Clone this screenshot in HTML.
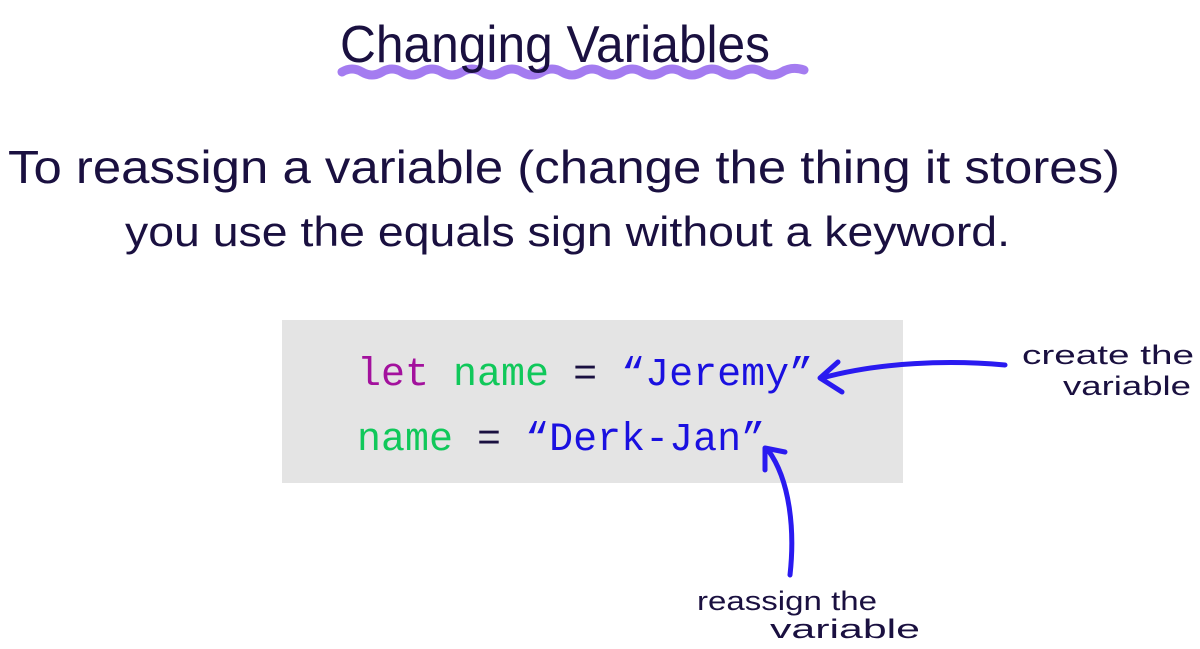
<!DOCTYPE html>
<html><head><meta charset="utf-8"><style>
html,body{margin:0;padding:0;background:#fff;width:1200px;height:649px;overflow:hidden}
</style></head><body>
<svg width="1200" height="649" viewBox="0 0 1200 649" xmlns="http://www.w3.org/2000/svg">
<path d="M342 72 q10 -6 20 0 t20 0 t20 0 t20 0 t20 0 t20 0 t20 0 t20 0 t20 0 t20 0 t20 0 t20 0 t20 0 t20 0 t20 0 t20 0 t20 0 t20 0 t20 0 t20 0 t20 0 t20 0 t22 -2" fill="none" stroke="#a47cf0" stroke-width="9" stroke-linecap="round"/>
<g font-family="Liberation Sans, sans-serif" fill="#1a1040">
<text x="340" y="62" font-size="52" textLength="430" lengthAdjust="spacingAndGlyphs">Changing Variables</text>
<text x="8" y="183" font-size="46" textLength="1112" lengthAdjust="spacingAndGlyphs">To reassign a variable (change the thing it stores)</text>
<text x="125" y="246" font-size="42" textLength="885" lengthAdjust="spacingAndGlyphs">you use the equals sign without a keyword.</text>
<text x="1022" y="364" font-size="27" textLength="172" lengthAdjust="spacingAndGlyphs">create the</text>
<text x="1063" y="395" font-size="27" textLength="128" lengthAdjust="spacingAndGlyphs">variable</text>
<text x="697" y="610" font-size="27" textLength="180" lengthAdjust="spacingAndGlyphs">reassign the</text>
<text x="770" y="638" font-size="27" textLength="150" lengthAdjust="spacingAndGlyphs">variable</text>
</g>
<rect x="282" y="320" width="621" height="163" fill="#e4e4e4"/>
<g font-family="Liberation Mono, monospace" font-size="40">
<text x="357" y="385"><tspan fill="#a3119d">let</tspan> <tspan fill="#10c85a">name</tspan> <tspan fill="#1a1040">=</tspan> <tspan fill="#1a10e0">“Jeremy”</tspan></text>
<text x="357" y="450"><tspan fill="#10c85a">name</tspan> <tspan fill="#1a1040">=</tspan> <tspan fill="#1a10e0">“Derk-Jan”</tspan></text>
</g>
<g fill="none" stroke="#2a1af0" stroke-width="5" stroke-linecap="round" stroke-linejoin="round">
<path d="M1005 365 C950 360 880 362 822 378"/>
<path d="M838 362 L820 378 L842 392"/>
<path d="M790 575 C795 530 790 480 768 450"/>
<path d="M765 470 L765 448 L785 452"/>
</g>
</svg>
</body></html>
